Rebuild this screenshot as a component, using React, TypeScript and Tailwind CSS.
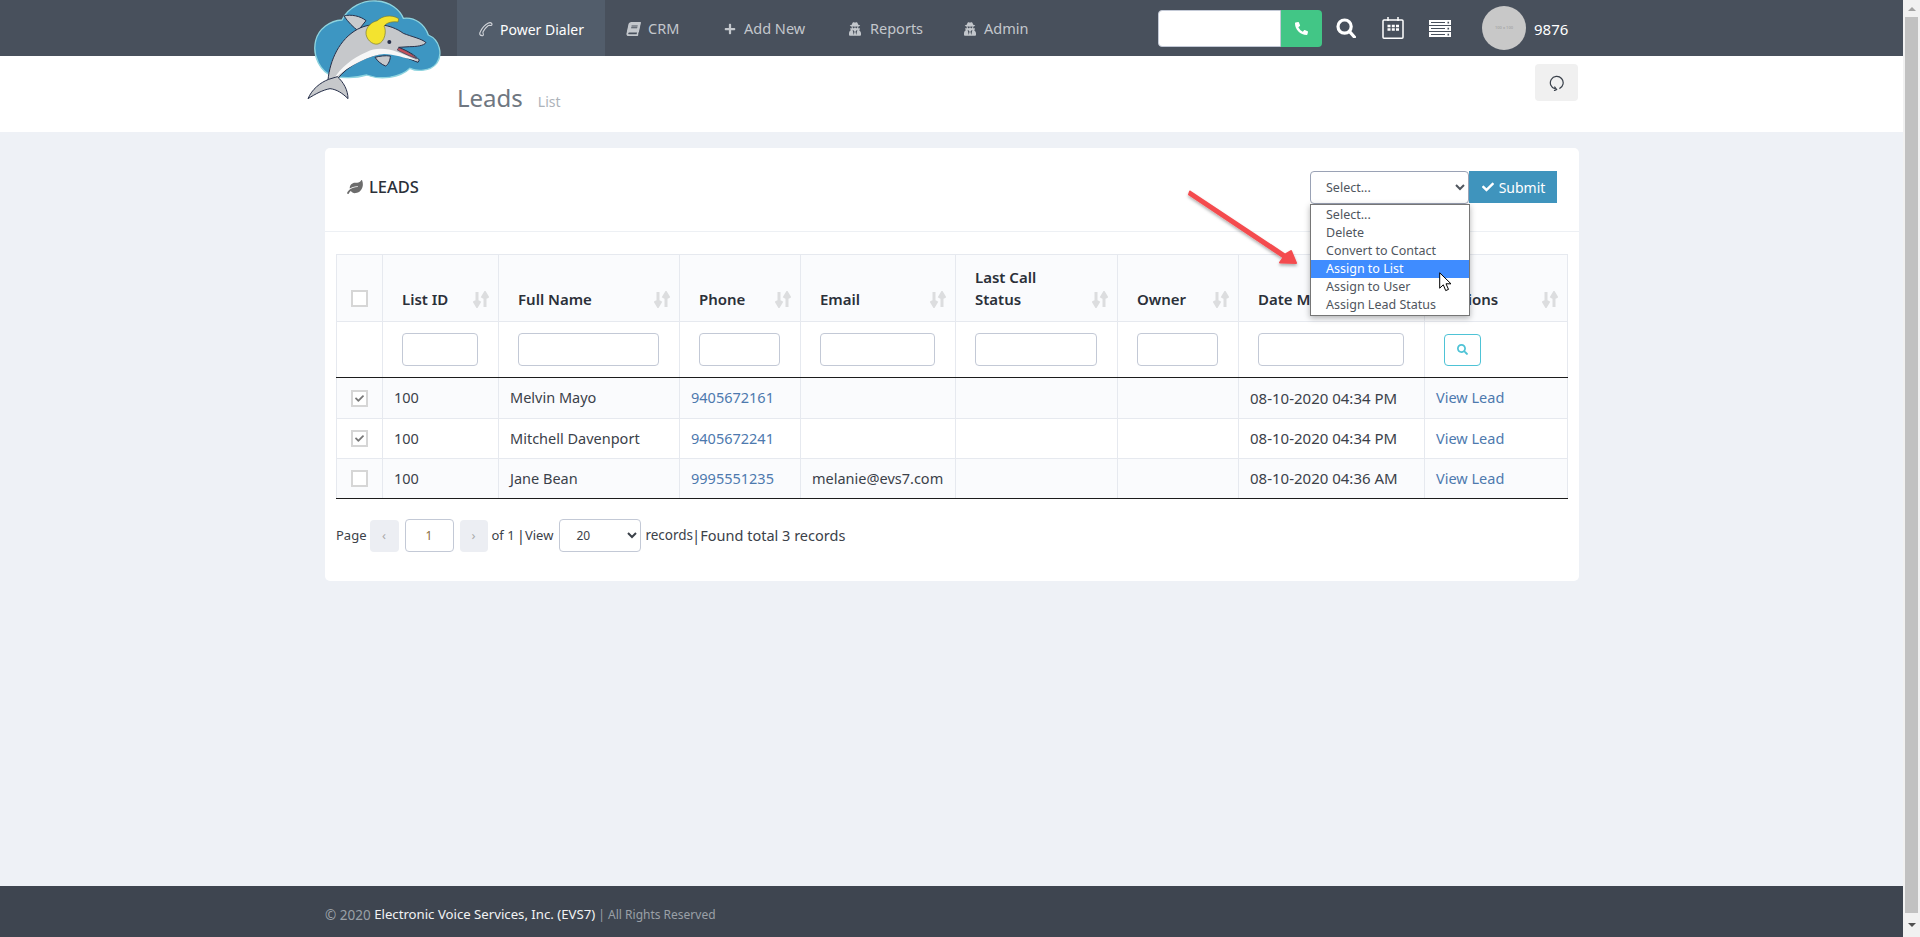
import { FaBook, FaCheck, FaLeaf, FaPhoneAlt, FaPlus, FaSearch, FaUserSecret } from "react-icons/fa"

const rows = [
  { id: "100", name: "Melvin Mayo", phone: "9405672161", email: "", date: "08-10-2020 04:34 PM", checked: true },
  { id: "100", name: "Mitchell Davenport", phone: "9405672241", email: "", date: "08-10-2020 04:34 PM", checked: true },
  { id: "100", name: "Jane Bean", phone: "9995551235", email: "melanie@evs7.com", date: "08-10-2020 04:36 AM", checked: false },
]

const options = ["Select...", "Delete", "Convert to Contact", "Assign to List", "Assign to User", "Assign Lead Status"]

function Logo() {
  return (
    <svg viewBox="0 0 510 330" className="absolute left-[300px] top-0 z-20 h-[110px] w-[170px]">
      <path
        d="M100 228C62 218 36 168 47 122 56 86 90 62 126 60 146 20 190 0 230 3c40 2 70 27 80 52 36-5 65 20 75 50 36 15 43 60 25 85-20 25-60 25-80 15-30 30-90 35-130 20-35 10-75 10-100 3Z"
        fill="#3d96c2"
        stroke="#8ed4df"
        strokeWidth="4"
      />
      <path
        d="M132 48c20-6 50 0 66 14l-24 30c-14-10-30-26-42-44Z"
        fill="#c9cbce"
        stroke="#27304a"
        strokeWidth="3"
      />
      <path
        d="M84 240C90 180 118 118 172 88c44-24 100-16 138 12 24 10 56 16 68 28-6 9-28 12-50 12l-32 2c28 12 48 22 62 38l-4 7c-32-12-62-28-92-30-54 8-118 36-152 83Z"
        fill="#c6c8cb"
        stroke="#27304a"
        strokeWidth="3"
        strokeLinejoin="round"
      />
      <path d="M296 143c22 8 42 20 54 33-22-8-44-18-58-26Z" fill="#c4505a" stroke="#27304a" strokeWidth="2" />
      <path
        d="M200 156c26-14 60-12 92 0 18 6 40 16 58 26-38-8-68-20-98-20-40 4-100 30-152 76 22-34 56-64 100-82Z"
        fill="#f7f7f7"
      />
      <path d="M225 172c14-4 32-6 46-4 0 12-6 26-14 30-12-4-24-14-32-26Z" fill="#c6c8cb" stroke="#27304a" strokeWidth="3" />
      <path
        d="M86 238c-26 10-50 30-62 58 22-14 44-26 66-30 20 2 38 14 54 30 0-26-14-50-32-66Z"
        fill="#c6c8cb"
        stroke="#27304a"
        strokeWidth="3"
        strokeLinejoin="round"
      />
      <path
        d="M232 62c14-14 42-20 64-6l-2 10c-16-2-32 0-42 12 8 12 4 48-18 54-18 4-38-16-36-36 2-16 16-30 34-34Z"
        fill="#f3e32f"
        stroke="#7a7a2a"
        strokeWidth="2"
      />
      <circle cx="268" cy="126" r="6" fill="#27304a" />
    </svg>
  )
}

function SortIcon() {
  return (
    <svg viewBox="0 0 16 17" className="mb-[2px] h-[17px] w-4 shrink-0" fill="none" stroke="#dcdddf" strokeWidth="3">
      <path d="M4 1v13M1 10l3 5 3-5" />
      <path d="M12 16V3M9 7l3-5 3 5" />
    </svg>
  )
}

function Checkbox({ checked }: { checked?: boolean }) {
  return (
    <span className="mx-auto flex h-[17px] w-[17px] items-center justify-center border-2 border-[#d6d6d6] bg-white text-[#777]">
      {checked ? <FaCheck className="h-[9px] w-[9px]" /> : null}
    </span>
  )
}

function Th({ children }: { children: React.ReactNode }) {
  return (
    <th className="border border-[#e6e9ef] pb-[11px] pl-[19px] pr-[9px] align-bottom text-left text-[15px] font-semibold">
      <div className="flex items-end justify-between leading-[22px]">
        <span>{children}</span>
        <SortIcon />
      </div>
    </th>
  )
}

function FilterCell() {
  return (
    <td className="border border-[#e6e9ef] border-b-[#1c1c1c] pl-[19px] pr-5">
      <input className="block h-[33px] w-full rounded-[4px] border border-[#c3c9d6] bg-white" />
    </td>
  )
}

export default function App() {
  return (
    <div className="relative flex h-[937px] w-full overflow-hidden font-['Noto_Sans',sans-serif] text-[14px] text-[#3b4149]">
      <Logo />

      <div className="flex w-[1903px] shrink-0 flex-col">
        <nav className="flex h-14 shrink-0 items-center bg-[#48505c] pl-[457px] text-[14.5px] text-[#c3c7cc]">
          <a className="flex h-14 w-[148px] items-center bg-[#525d6b] pl-[21px] pt-[2px] text-[14px] text-white">
            <svg viewBox="0 0 16 16" className="mr-[6px] h-4 w-4" fill="none" stroke="#d0d3d8" strokeWidth="1.1">
              <path d="M2.6 14.4c-1.1-.9-1-2.4-.3-3.7C3.9 7.4 7 3.8 10 2.2c1.4-.7 3-.7 3.8.4.5.8.1 1.8-.8 1.9l-1.7-.2c-.7 0-1.1.3-1.6.7-1.7 1.4-3.6 3.7-4.6 5.7-.3.6-.2 1.1 0 1.7l.3 1.2c.1 1-1.1 1.5-2.3.6Z" />
            </svg>
            Power Dialer
          </a>
          <a className="ml-[22px] flex w-[97px] items-center pt-[2px]">
            <FaBook className="mr-2 h-[14px] w-[13px] -skew-x-12" />
            CRM
          </a>
          <a className="flex w-[125px] items-center pt-[2px]">
            <FaPlus className="mr-2 h-3 w-3" />
            Add New
          </a>
          <a className="flex w-[115px] items-center pt-[2px]">
            <FaUserSecret className="mr-[9px] h-[14px] w-3" />
            Reports
          </a>
          <a className="flex w-[194px] items-center pt-[2px]">
            <FaUserSecret className="mr-2 h-[14px] w-3" />
            Admin
          </a>

          <div className="flex h-[37px] w-[164px]">
            <input className="h-full w-[123px] rounded-l-[4px] border border-[#c3c9d6] bg-white" />
            <button className="flex h-full flex-1 items-center justify-center rounded-r-[4px] bg-[#42c686] text-white">
              <FaPhoneAlt className="h-[13px] w-[13px]" />
            </button>
          </div>
          <svg viewBox="0 0 20 20" className="ml-[14px] h-5 w-5" fill="none" stroke="#fff" strokeWidth="3.2">
            <circle cx="8.6" cy="8.6" r="6.6" />
            <path d="m13.4 13.4 5 5.6" strokeLinecap="round" />
          </svg>
          <svg viewBox="0 0 22 22" className="ml-[26px] h-[22px] w-[22px]" fill="none" stroke="#fff" strokeWidth="1.5">
            <rect x="1" y="3" width="20" height="18.2" rx="1" />
            <path d="M6 0v4M16 0v4" />
            <path d="M5.5 9h3M9.8 9h3M14 9h3M5.5 12.5h3M9.8 12.5h3M14 12.5h3" strokeWidth="2.4" />
          </svg>
          <svg viewBox="0 0 22 17" className="ml-[25px] h-[17px] w-[22px]" fill="#fff">
            <rect width="22" height="5" />
            <rect y="6" width="22" height="5" />
            <rect y="12" width="22" height="5" />
            <path d="M2 2h14v1H2zM2 8h14v1H2zM2 14h14v1H2z" fill="#48505c" />
            <path d="M18.5 1.8h1.6v1.6h-1.6zM18.5 7.8h1.6v1.6h-1.6zM18.5 13.8h1.6v1.6h-1.6z" fill="#48505c" />
          </svg>
          <div className="ml-[31px] flex h-11 w-11 items-center justify-center rounded-full bg-[#c8c8c8] text-[4px] text-[#999]">
            100 x 100
          </div>
          <span className="ml-[8px] mt-[3px] text-[15px] text-white">9876</span>
        </nav>

        <header className="flex h-[76px] shrink-0 items-start justify-between bg-white pl-[457px] pr-[325px]">
          <div className="mt-[24px] flex items-baseline">
            <h1 className="text-[24px] leading-[36px] text-[#6f7781]">Leads</h1>
            <span className="ml-[15px] text-[14px] text-[#adb3ba]">List</span>
          </div>
          <button className="mt-2 flex h-[37px] w-[43px] items-center justify-center rounded-[4px] bg-[#f0f0f0]">
            <svg viewBox="0 0 16 16" className="h-4 w-4" fill="none" stroke="#39404a" strokeWidth="1.2">
              <path d="M6.3 14A6.4 6.4 0 1 1 10.4 13.6" />
              <path d="M5.4 11.6 7.6 14.6 5 15.8" />
            </svg>
          </button>
        </header>

        <main className="flex-1 bg-[#eef1f6] pl-[325px] pt-4">
          <section className="h-[433px] w-[1254px] rounded-[5px] bg-white">
            <div className="flex h-[84px] justify-between border-b border-[#edf0f4] pl-[22px] pr-[22px]">
              <h2 className="mt-[27px] flex h-6 items-center text-[16.5px] font-medium uppercase text-[#2b3039]">
                <FaLeaf className="mr-[6px] h-[14px] w-[16px] text-[#6c6c6c]" />
                Leads
              </h2>
              <div className="relative mt-[23px] flex h-[33px] items-start">
                <select className="h-[33px] w-[159px] rounded-[4px] border border-[#9aa2b5] bg-white pl-[11px] text-[12.5px] text-[#50565e]">
                  <option>Select...</option>
                </select>
                <button className="flex h-[32px] w-[88px] items-center justify-center gap-[4px] bg-[#3f94bd] text-[14px] text-white">
                  <FaCheck className="h-3 w-[14px]" />
                  Submit
                </button>
                <ul className="absolute left-0 top-[33px] z-10 w-[160px] border border-[#767676] bg-white py-[1px] text-[12.5px] leading-[18px] text-[#50565e] shadow-[0_2px_6px_rgba(0,0,0,0.3)]">
                  {options.map((option) => (
                    <li
                      key={option}
                      className={option === "Assign to List" ? "h-[18px] bg-[#3f8cff] pl-[15px] text-white" : "h-[18px] pl-[15px]"}
                    >
                      {option}
                    </li>
                  ))}
                </ul>
              </div>
            </div>

            <div className="px-3 pt-[22px]">
              <table className="-ml-px w-[1231px] table-fixed border-collapse text-[14.5px]">
                <colgroup>
                  <col className="w-[46px]" />
                  <col className="w-[116px]" />
                  <col className="w-[181px]" />
                  <col className="w-[121px]" />
                  <col className="w-[155px]" />
                  <col className="w-[162px]" />
                  <col className="w-[121px]" />
                  <col className="w-[186px]" />
                  <col className="w-[143px]" />
                </colgroup>
                <thead>
                  <tr className="h-[67px] bg-[#fafbfd] text-[#2b3039]">
                    <th className="border border-[#e6e9ef] pb-[14px] align-bottom">
                      <Checkbox />
                    </th>
                    <Th>List ID</Th>
                    <Th>Full Name</Th>
                    <Th>Phone</Th>
                    <Th>Email</Th>
                    <Th>
                      Last Call
                      <br />
                      Status
                    </Th>
                    <Th>Owner</Th>
                    <Th>Date Modified</Th>
                    <Th>Actions</Th>
                  </tr>
                  <tr className="h-[56px]">
                    <td className="border border-[#e6e9ef] border-b-[#1c1c1c]" />
                    <FilterCell />
                    <FilterCell />
                    <FilterCell />
                    <FilterCell />
                    <FilterCell />
                    <FilterCell />
                    <FilterCell />
                    <td className="border border-[#e6e9ef] border-b-[#1c1c1c] pl-[19px] pr-5">
                      <button className="flex h-8 w-[37px] items-center justify-center rounded-[4px] border border-[#4ec3d6] bg-white text-[#4ec3d6]">
                        <FaSearch className="h-[11px] w-[11px]" />
                      </button>
                    </td>
                  </tr>
                </thead>
                <tbody>
                  {rows.map((row, index) => {
                    const cell =
                      index === rows.length - 1
                        ? "border border-[#e6e9ef] border-b-[#1c1c1c] pl-[11px]"
                        : "border border-[#e6e9ef] pl-[11px]"
                    const height = index === 0 ? "h-[41px] bg-[#fafbfd]" : index === 1 ? "h-10 bg-white" : "h-10 bg-[#fafbfd]"
                    return (
                      <tr key={row.phone} className={height}>
                        <td className={index === rows.length - 1 ? "border border-[#e6e9ef] border-b-[#1c1c1c]" : "border border-[#e6e9ef]"}>
                          <Checkbox checked={row.checked} />
                        </td>
                        <td className={cell}>{row.id}</td>
                        <td className={cell}>{row.name}</td>
                        <td className={cell + " text-[#4d79ae]"}>{row.phone}</td>
                        <td className={cell}>{row.email}</td>
                        <td className={cell} />
                        <td className={cell} />
                        <td className={cell + " text-[15px]"}>{row.date}</td>
                        <td className={cell + " text-[#4d79ae]"}>View Lead</td>
                      </tr>
                    )
                  })}
                </tbody>
              </table>

              <div className="-ml-px mt-[20px] flex h-[33px] items-center text-[13px]">
                <span>Page</span>
                <button className="ml-[3px] flex h-8 w-[29px] items-center justify-center rounded-[4px] bg-[#eceef3] text-[#aaa]">‹</button>
                <input
                  defaultValue="1"
                  className="ml-[6px] h-[33px] w-[49px] rounded-[4px] border border-[#c3c9d6] text-center text-[12px] text-[#8a6d3b]"
                />
                <button className="ml-[6px] flex h-8 w-[28px] items-center justify-center rounded-[4px] bg-[#eceef3] text-[#aaa]">›</button>
                <span className="ml-[4px]">of 1</span>
                <span className="ml-[2px] text-[15px]">|</span>
                <span>View</span>
                <select className="ml-[6px] h-[33px] w-[82px] rounded-[4px] border border-[#c3c9d6] bg-white pl-[12px] text-[12px]">
                  <option>20</option>
                </select>
                <span className="ml-1 text-[13.5px]">records</span>
                <span className="-ml-px text-[15px]">|</span>
                <span className="text-[14.5px]">Found total 3 records</span>
              </div>
            </div>
          </section>
        </main>

        <footer className="flex h-[51px] shrink-0 items-center bg-[#3e4550] pl-[325px] pt-[7px] text-[13.5px] text-[#9aa0a7]">
          © 2020&nbsp;<span className="text-[13.2px] text-[#f2f3f4]">Electronic Voice Services, Inc. (EVS7)</span>
          <span className="text-[12px]">&nbsp;| All Rights Reserved</span>
        </footer>
      </div>

      <aside className="flex w-[17px] shrink-0 flex-col items-center bg-[#f1f1f1]">
        <span className="mt-[7px] h-0 w-0 border-x-[4px] border-b-[4px] border-x-transparent border-b-[#a3a3a3]" />
        <span className="mt-[6px] h-[896px] w-[13px] bg-[#c1c1c1]" />
        <span className="mt-[10px] h-0 w-0 border-x-[4px] border-t-[4px] border-x-transparent border-t-[#505050]" />
      </aside>

      {/* annotation arrow and mouse pointer laid over the screenshot */}
      <svg className="pointer-events-none absolute left-[1180px] top-[180px] z-30 h-[100px] w-[130px]" viewBox="0 0 130 100">
        <defs>
          <filter id="arrowShadow" x="-20%" y="-20%" width="140%" height="140%">
            <feDropShadow dx="0" dy="2" stdDeviation="1.5" floodColor="#000" floodOpacity="0.3" />
          </filter>
        </defs>
        <path
          d="M10 11.5 105 74.5l6-3.5 5 12-16-.5 3.5-5L9 14.5Z"
          fill="#f44c4f"
          stroke="#f44c4f"
          strokeWidth="2"
          strokeLinejoin="round"
          filter="url(#arrowShadow)"
        />
      </svg>
      <svg className="pointer-events-none absolute left-[1439px] top-[272px] z-30 h-5 w-[13px]" viewBox="0 0 13 20">
        <path d="M.7.8v15.4l3.6-3.4 2.4 5.8 2.8-1.2-2.5-5.6h5L.7.8Z" fill="#fff" stroke="#000" strokeWidth="1" />
      </svg>
    </div>
  )
}
